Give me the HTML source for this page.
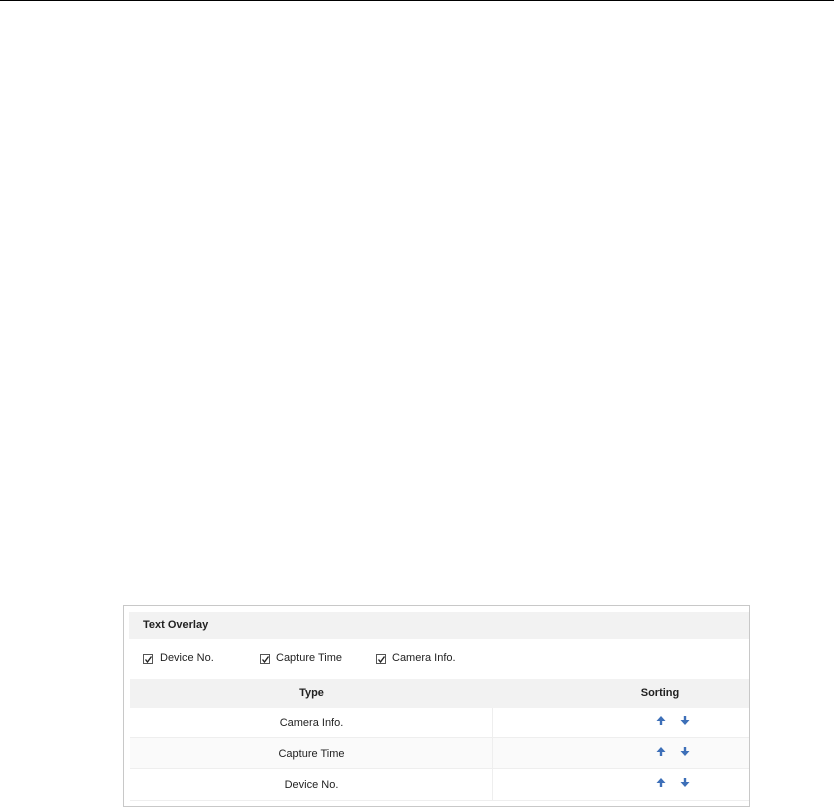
<!DOCTYPE html>
<html><head><meta charset="utf-8"><style>
*{margin:0;padding:0;box-sizing:border-box}
body{width:837px;height:807px;background:#fff;position:relative;overflow:hidden;font-family:"Liberation Sans",Arial,sans-serif;font-size:11px;color:#222}
.a{position:absolute}
.cb{position:absolute;width:10px;height:10px;border:1px solid #555;background:#fff}
.cb svg{position:absolute;left:0;top:0}
.lbl{position:absolute;line-height:12px}
.row{position:absolute;left:130px;width:619px}
.cell{position:absolute;text-align:center;line-height:12px}
</style></head><body>
<div class="a" style="left:0;top:0;width:834px;height:1px;background:#000"></div>
<div class="a" style="left:123px;top:605px;width:627px;height:202px;border:1px solid #c8c8c8"></div>
<div class="a" style="left:129px;top:612px;width:620px;height:27px;background:#f2f2f2"></div>
<div class="lbl" style="left:143px;top:619px;font-weight:bold">Text Overlay</div>

<div class="cb" style="left:143px;top:654px"><svg width="9" height="9"><path d="M1.5 4.5 L3.5 7 L7.5 1.5" stroke="#222" stroke-width="1.4" fill="none"/></svg></div>
<div class="lbl" style="left:160px;top:652px">Device No.</div>
<div class="cb" style="left:260px;top:654px"><svg width="9" height="9"><path d="M1.5 4.5 L3.5 7 L7.5 1.5" stroke="#222" stroke-width="1.4" fill="none"/></svg></div>
<div class="lbl" style="left:276px;top:652px">Capture Time</div>
<div class="cb" style="left:376px;top:654px"><svg width="9" height="9"><path d="M1.5 4.5 L3.5 7 L7.5 1.5" stroke="#222" stroke-width="1.4" fill="none"/></svg></div>
<div class="lbl" style="left:392px;top:652px">Camera Info.</div>

<div class="row" style="top:679px;height:29px;background:#f2f2f2"></div>
<div class="cell" style="left:130px;width:363px;top:687px;font-weight:bold">Type</div>
<div class="cell" style="left:620px;width:80px;top:687px;font-weight:bold">Sorting</div>

<div class="row" style="top:708px;height:30px;background:#fff;border-bottom:1px solid #eee"></div>
<div class="row" style="top:738px;height:31px;background:#fafafa;border-bottom:1px solid #eee"></div>
<div class="row" style="top:769px;height:32px;background:#fff;border-bottom:1px solid #eee"></div>
<div class="a" style="left:492px;top:708px;width:1px;height:93px;background:#eee"></div>

<div class="cell" style="left:130px;width:363px;top:717px">Camera Info.</div>
<div class="cell" style="left:130px;width:363px;top:748px">Capture Time</div>
<div class="cell" style="left:130px;width:363px;top:779px">Device No.</div>

<svg class="a" style="left:655px;top:714px" width="40" height="80">
<g fill="#3d6fb8">
<path d="M6 2 L10.5 7 L7.2 7 L7.2 11 L4.8 11 L4.8 7 L1.5 7 Z"/>
<path d="M30 11 L34.5 6 L31.2 6 L31.2 2 L28.8 2 L28.8 6 L25.5 6 Z"/>
<g transform="translate(0,31)"><path d="M6 2 L10.5 7 L7.2 7 L7.2 11 L4.8 11 L4.8 7 L1.5 7 Z"/><path d="M30 11 L34.5 6 L31.2 6 L31.2 2 L28.8 2 L28.8 6 L25.5 6 Z"/></g>
<g transform="translate(0,62)"><path d="M6 2 L10.5 7 L7.2 7 L7.2 11 L4.8 11 L4.8 7 L1.5 7 Z"/><path d="M30 11 L34.5 6 L31.2 6 L31.2 2 L28.8 2 L28.8 6 L25.5 6 Z"/></g>
</g></svg>
</body></html>
